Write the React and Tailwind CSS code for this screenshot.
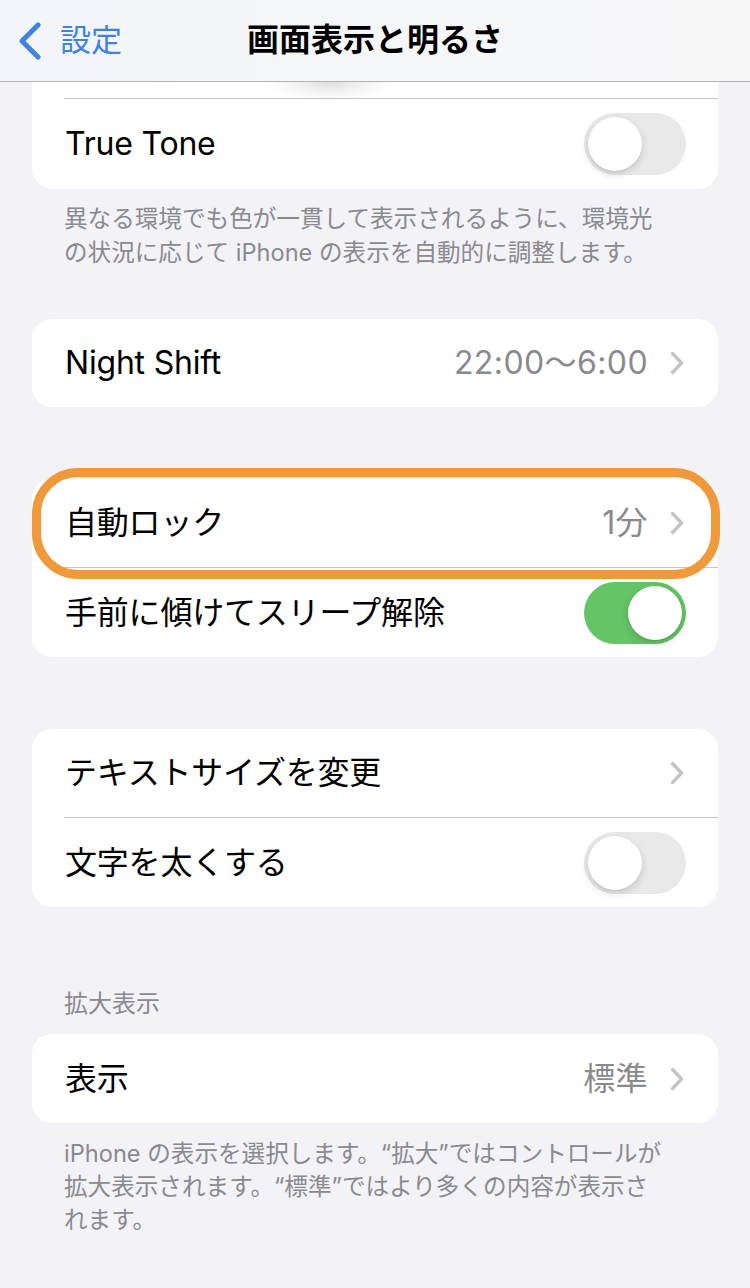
import React from "react";

const FONT = "font-['Inter','Noto_Sans_CJK_JP',sans-serif]";

function Chevron() {
  return (
    <svg width="14" height="24" viewBox="0 0 14 24" className="shrink-0">
      <path d="M2.5 2.5 L11.5 12 L2.5 21.5" fill="none" stroke="#c4c4c7" strokeWidth="3.4" strokeLinecap="round" strokeLinejoin="round" />
    </svg>
  );
}

function Toggle({ on }) {
  return (
    <div className={`w-[102px] h-[62px] rounded-full p-[4px] flex shrink-0 ${on ? "bg-[#65c466] justify-end" : "bg-[#e9e9ea] justify-start"}`}>
      <div className="w-[54px] h-[54px] rounded-full bg-white shadow-[0_3px_8px_rgba(0,0,0,0.15),0_1px_1px_rgba(0,0,0,0.08)]" />
    </div>
  );
}

function Row({ label, value, chevron, toggle, h = "h-[88px]" }) {
  return (
    <div className={`${h} flex items-center pl-[33px] pr-[32px]`}>
      <span className="text-[32px] text-black flex-1 tracking-[-0.2px]">{label}</span>
      {value && <span className="text-[32px] text-[#8a8a8e] mr-[22px] tracking-[0.4px]">{value}</span>}
      {chevron && <span className="mr-[2px]"><Chevron /></span>}
      {toggle !== undefined && <Toggle on={toggle} />}
    </div>
  );
}

function Sep() {
  return <div className="ml-[32px] h-px bg-[#c6c6c8]" />;
}

export default function App() {
  return (
    <div className={`w-[750px] min-h-[1288px] bg-[#f2f2f7] ${FONT} overflow-hidden`}>
      <div className="relative z-10 h-[82px] bg-gradient-to-r from-[#f2f5f9] to-[#f7f7f8] border-b border-[#b3b3b5] grid grid-cols-[1fr_auto_1fr] items-center">
        <div className="flex items-center pl-[18px] gap-[18px] text-[#3f82e4]">
          <svg width="24" height="38" viewBox="0 0 24 38">
            <path d="M20 3 L4 19 L20 35" fill="none" stroke="#3f82e4" strokeWidth="5" strokeLinecap="round" strokeLinejoin="round" />
          </svg>
          <span className="text-[31px] leading-none -mt-[2px]">設定</span>
        </div>
        <div className="text-[32px] font-bold text-black leading-none -mt-[2px]">画面表示と明るさ</div>
        <div />
      </div>

      <div className="px-[32px]">
        <div className="relative bg-white rounded-b-[20px]">
          <div className="absolute left-[238px] top-0 w-[120px] h-[18px] bg-[radial-gradient(ellipse_at_top,rgba(0,0,0,0.13),rgba(0,0,0,0.04)_45%,transparent_75%)]" />
          <div className="h-[16px]" />
          <Sep />
          <Row label="True Tone" toggle={false} h="h-[90px]" />
        </div>

        <p className="pt-[13px] px-[32px] text-[23.6px] leading-[34px] text-[#8a8a8e] whitespace-nowrap">
          異なる環境でも色が一貫して表示されるように、環境光
          <br />
          の状況に応じて iPhone の表示を自動的に調整します。
        </p>

        <div className="mt-[49px] bg-white rounded-[20px]">
          <Row label="Night Shift" value="22:00〜6:00" chevron />
        </div>

        <div className="relative mt-[72px] bg-white rounded-[20px]">
          <Row label="自動ロック" value="1分" chevron />
          <Sep />
          <Row label="手前に傾けてスリープ解除" toggle={true} h="h-[89px]" />
          <div className="absolute left-0 right-[-2px] top-[-11px] h-[111px] rounded-[46px] border-[9px] border-[#f0993b]" />
        </div>

        <div className="mt-[72px] bg-white rounded-[20px]">
          <Row label="テキストサイズを変更" chevron />
          <Sep />
          <Row label="文字を太くする" toggle={false} h="h-[89px]" />
        </div>

        <div className="mt-[80px] px-[32px] text-[24px] leading-[34px] text-[#8a8a8e]">拡大表示</div>

        <div className="mt-[13px] bg-white rounded-[20px]">
          <Row label="表示" value="標準" chevron h="h-[89px]" />
        </div>

        <p className="pt-[14px] px-[32px] text-[23.6px] leading-[33px] text-[#8a8a8e] whitespace-nowrap">
          iPhone の表示を選択します。“拡大”ではコントロールが
          <br />
          拡大表示されます。“標準”ではより多くの内容が表示さ
          <br />
          れます。
        </p>
      </div>
    </div>
  );
}
